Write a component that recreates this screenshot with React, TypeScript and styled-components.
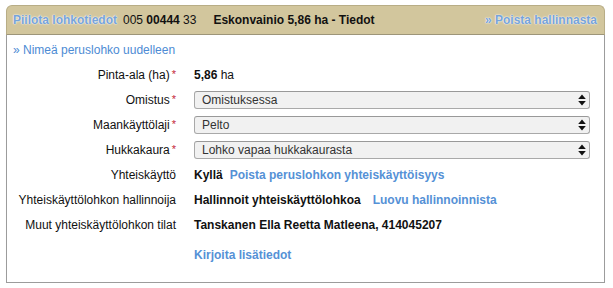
import React from "react";
import styled, { createGlobalStyle } from "styled-components";

const GlobalStyle = createGlobalStyle`
  body {
    margin: 0;
    background: #ffffff;
    font-family: "Liberation Sans", Arial, sans-serif;
    font-size: 12px;
    color: #111;
  }
`;

interface SelectRow {
  label: string;
  value: string;
}

const selects: SelectRow[] = [
  { label: "Omistus", value: "Omistuksessa" },
  { label: "Maankäyttölaji", value: "Pelto" },
  { label: "Hukkakaura", value: "Lohko vapaa hukkakaurasta" },
];

function UpDown() {
  return (
    <Arrows width="8" height="12" viewBox="0 0 8 12">
      <path d="M4 0.5 L7.8 5 L0.2 5 Z" fill="#111" />
      <path d="M4 11.5 L7.8 7 L0.2 7 Z" fill="#111" />
    </Arrows>
  );
}

export default function App() {
  return (
    <>
      <GlobalStyle />
      <Panel>
        <Header>
          <HeaderLink>Piilota lohkotiedot</HeaderLink>
          <Code>
            005 <b>00444</b> 33
          </Code>
          <Title>Eskonvainio 5,86 ha - Tiedot</Title>
          <HeaderLink $right>» Poista hallinnasta</HeaderLink>
        </Header>
        <Body>
          <RenameLink>» Nimeä peruslohko uudelleen</RenameLink>
          <Form>
            <Label>
              Pinta-ala (ha)<Req>*</Req>
            </Label>
            <Value>
              <span>
                <b>5,86</b> ha
              </span>
            </Value>

            {selects.map((s) => (
              <React.Fragment key={s.label}>
                <Label>
                  {s.label}
                  <Req>*</Req>
                </Label>
                <Value>
                  <SelectBox>
                    <span>{s.value}</span>
                    <UpDown />
                  </SelectBox>
                </Value>
              </React.Fragment>
            ))}

            <Label>Yhteiskäyttö</Label>
            <Value>
              <b>Kyllä</b>
              <Link>Poista peruslohkon yhteiskäyttöisyys</Link>
            </Value>

            <Label>Yhteiskäyttölohkon hallinnoija</Label>
            <Value>
              <b>Hallinnoit yhteiskäyttölohkoa</b>
              <Link $wide>Luovu hallinnoinnista</Link>
            </Value>

            <Label>Muut yhteiskäyttölohkon tilat</Label>
            <Value>
              <b>Tanskanen Ella Reetta Matleena, 414045207</b>
            </Value>

            <Label />
            <Value $extra>
              <Link $first>Kirjoita lisätiedot</Link>
            </Value>
          </Form>
        </Body>
      </Panel>
    </>
  );
}

//styled-component
const Panel = styled.div`
  width: 599px;
  margin: 5px 0 0 6px;
  box-shadow: 0 3px 2px -1px rgba(0, 0, 0, 0.08);
`;

const Header = styled.div`
  display: flex;
  align-items: center;
  height: 30px;
  padding: 0 7px 0 6px;
  background: #d2c69d;
  border: 1px solid #b8ad86;
  border-bottom-color: #9d9579;
  border-radius: 6px 6px 0 0;
  box-sizing: border-box;
  font-size: 12px;
`;

const HeaderLink = styled.span<{ $right?: boolean }>`
  font-weight: bold;
  color: #76a3d9;
  text-shadow: 0 0 2px #fff, 0 0 1px #fff;
  margin-left: ${({ $right }) => ($right ? "auto" : "0")};
  cursor: pointer;
`;

const Code = styled.span`
  margin-left: 6px;
  color: #111;
`;

const Title = styled.span`
  margin-left: 17px;
  font-weight: bold;
  color: #111;
`;

const Body = styled.div`
  border: 1px solid #9c9c9c;
  border-top: none;
  padding: 8px 0 15px 6px;
`;

const RenameLink = styled.div`
  color: #4d8bd4;
  line-height: 14px;
  cursor: pointer;
`;

const Form = styled.div`
  display: grid;
  grid-template-columns: 163px 1fr;
  column-gap: 18px;
  margin-top: 5px;
`;

const Label = styled.div`
  height: 25px;
  display: flex;
  align-items: center;
  justify-content: flex-end;
  color: #111;
  white-space: nowrap;
`;

const Req = styled.span`
  color: #c4283a;
  margin-left: 2px;
  font-size: 11px;
  position: relative;
  top: -1px;
`;

const Value = styled.div<{ $extra?: boolean }>`
  height: 25px;
  display: flex;
  align-items: center;
  margin-top: ${({ $extra }) => ($extra ? "5px" : "0")};
  white-space: nowrap;
  color: #111;
`;

const Link = styled.span<{ $wide?: boolean; $first?: boolean }>`
  font-weight: bold;
  color: #5591d6;
  margin-left: ${({ $wide, $first }) => ($first ? "0" : $wide ? "12px" : "7px")};
  cursor: pointer;
`;

const SelectBox = styled.div`
  position: relative;
  width: 396px;
  height: 18px;
  box-sizing: border-box;
  display: flex;
  align-items: center;
  padding-left: 7px;
  background: #f1f1f1;
  border: 1px solid #a9a9a9;
  border-top-color: #999;
  border-radius: 3px;
  color: #333;
`;

const Arrows = styled.svg`
  position: absolute;
  right: 3px;
  top: 2px;
`;
